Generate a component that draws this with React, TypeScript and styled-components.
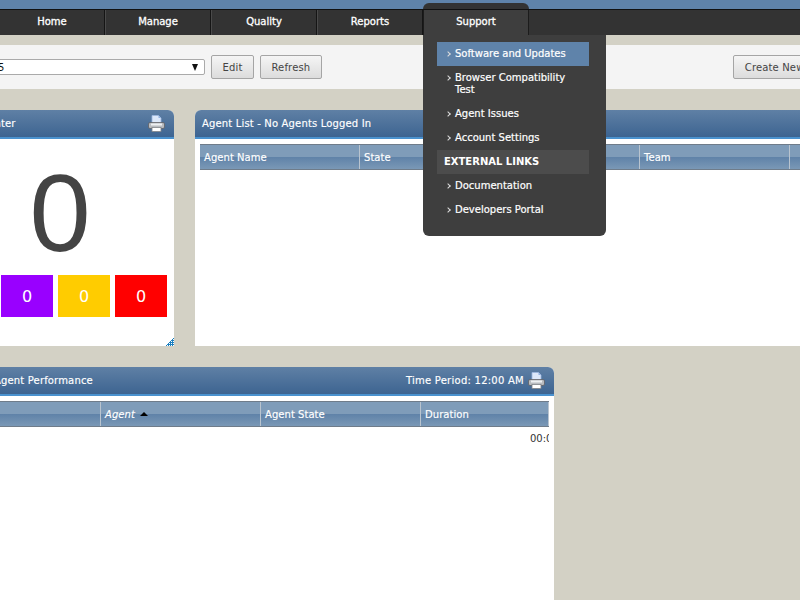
import styled, { createGlobalStyle } from 'styled-components';

const GlobalStyle = createGlobalStyle`
  html, body {
    margin: 0;
    padding: 0;
    background: #d3d1c5;
  }
  body {
    font-family: "DejaVu Sans", Verdana, sans-serif;
    font-size: 10px;
  }
`;

const Page = styled.div`
  position: relative;
  width: 800px;
  height: 600px;
  overflow: hidden;
  background: #d3d1c5;
`;

const TopStrip = styled.div`
  height: 9px;
  background: #5f83aa;
  border-bottom: 1px solid #111;
`;

const NavBar = styled.nav`
  display: flex;
  height: 25px;
  margin-left: -1px;
  background: #333;
`;

const NavItem = styled.div<{ $open?: boolean }>`
  position: relative;
  box-sizing: border-box;
  width: 106px;
  padding-bottom: 3px;
  display: flex;
  align-items: center;
  justify-content: center;
  color: #fff;
  font-size: 10px;
  -webkit-text-stroke: 0.3px #fff;
  border-right: 1px solid #151515;
  border-left: 1px solid #4a4a4a;
  ${(p) =>
    p.$open &&
    `
    background: #3e3e3e;
    border-left: 1px solid #1c1c1c;
    border-right: 1px solid #1c1c1c;
    z-index: 2;
    &::before {
      content: '';
      position: absolute;
      top: -7px;
      left: -1px;
      right: -1px;
      height: 6px;
      background: #333;
      border-radius: 6px 6px 0 0;
    }
  `}
`;

const Menu = styled.div`
  position: absolute;
  top: 25px;
  left: -1px;
  box-sizing: border-box;
  width: 183px;
  height: 201px;
  padding: 7px 17px 0 14px;
  background: #3e3e3e;
  border-radius: 0 0 6px 6px;
  text-align: left;
  -webkit-text-stroke: 0;
`;

const MenuItem = styled.div<{ $active?: boolean }>`
  position: relative;
  padding: 6px 12px 6px 18px;
  font-size: 10px;
  line-height: 12px;
  color: #fff;
  -webkit-text-stroke: 0.2px #fff;
  background: ${(p) => (p.$active ? '#5f83aa' : 'transparent')};
  &::before {
    content: '';
    position: absolute;
    left: 9px;
    top: 10px;
    width: 3px;
    height: 3px;
    border-top: 1px solid #ddd;
    border-right: 1px solid #ddd;
    transform: rotate(45deg);
  }
`;

const MenuHeading = styled.div`
  padding: 6px 7px;
  font-size: 10px;
  line-height: 12px;
  font-weight: bold;
  color: #fff;
  background: #4c4c4c;
`;

const Toolbar = styled.div`
  display: flex;
  align-items: center;
  gap: 6px;
  height: 44px;
  margin-top: 10px;
  background: #f4f4f4;
`;

const SelectBox = styled.div`
  box-sizing: border-box;
  display: flex;
  align-items: center;
  justify-content: space-between;
  width: 215px;
  height: 16px;
  margin-left: -10px;
  padding: 0 6px 0 7px;
  background: #fff;
  border: 1px solid #aaa;
  border-radius: 2px;
  color: #111;
  font-size: 10px;
`;

const Caret = styled.span`
  width: 0;
  height: 0;
  border-left: 3.5px solid transparent;
  border-right: 3.5px solid transparent;
  border-top: 7px solid #111;
`;

const Button = styled.button<{ $push?: boolean }>`
  box-sizing: border-box;
  height: 24px;
  padding: 0 10.5px;
  margin-left: ${(p) => (p.$push ? 'auto' : '0')};
  margin-right: ${(p) => (p.$push ? '-16px' : '0')};
  border: 1px solid #a5a5a5;
  border-radius: 2px;
  background: linear-gradient(#f5f5f5, #dcdcdc);
  color: #444;
  font-family: inherit;
  font-size: 10px;
  letter-spacing: 0.15px;
  white-space: nowrap;
`;

const PanelRow = styled.div<{ $left: number }>`
  display: flex;
  gap: 21px;
  margin: 21px 0 21px ${(p) => p.$left}px;
`;

const Panel = styled.section<{ $width: number; $height: number }>`
  position: relative;
  flex: none;
  box-sizing: border-box;
  width: ${(p) => p.$width}px;
  height: ${(p) => p.$height}px;
  background: #fff;
  border-radius: 6px 6px 0 0;
`;

const PanelHeader = styled.header`
  box-sizing: border-box;
  display: flex;
  align-items: center;
  height: 29px;
  padding: 0 9px 0 7px;
  background: linear-gradient(#5f80a5, #3d6491);
  border-bottom: 2px solid #4a92cf;
  border-radius: 6px 6px 0 0;
  color: #fff;
  font-size: 10px;
  letter-spacing: 0.16px;
  -webkit-text-stroke: 0.15px #fff;
`;

const HeaderRight = styled.div`
  display: flex;
  align-items: center;
  gap: 4px;
  margin-left: auto;
  letter-spacing: 0.25px;
`;

const PrinterIcon = () => (
  <svg width="17" height="17" viewBox="0 0 17 17">
    <path d="M4 .5h6.5L13 3v6H4z" fill="#dce8fa" stroke="#9db8e0" strokeWidth="0.8" />
    <path d="M10.5 .5V3H13" fill="#8fb0e0" />
    <rect x=".5" y="7.5" width="16" height="6" rx="1.5" fill="#b9bcc0" stroke="#5e6064" strokeWidth="0.8" />
    <rect x="3" y="8.5" width="11" height="2" fill="#eef0f2" />
    <rect x="4" y="12.5" width="9" height="4" fill="#fff" stroke="#7f8388" strokeWidth="0.8" />
  </svg>
);

const BigCount = styled.div`
  margin-top: 12px;
  text-align: center;
  font-family: "Liberation Sans", Arial, sans-serif;
  font-size: 110px;
  line-height: 124px;
  color: #444;
`;

const Tiles = styled.div`
  display: flex;
  justify-content: flex-end;
  gap: 5px;
  padding-right: 7px;
`;

const Tile = styled.div<{ $color: string }>`
  width: 52px;
  height: 42px;
  display: flex;
  align-items: center;
  justify-content: center;
  background: ${(p) => p.$color};
  color: #fff;
  font-size: 16px;
`;

const ResizeGrip = styled.svg`
  position: absolute;
  right: 0;
  bottom: 0;
`;

const TableHead = styled.div<{ $columns: string }>`
  display: grid;
  grid-template-columns: ${(p) => p.$columns};
  height: 26px;
  margin: 5px 5px 0;
  box-sizing: border-box;
  border-top: 1px solid #6f7c8a;
  border-bottom: 1px solid #6f7c8a;
  background: linear-gradient(#7f9cb9 0 50%, #5f82a8 50%, #7a98b6 100%);
`;

const HeadCell = styled.div<{ $italic?: boolean }>`
  display: flex;
  align-items: center;
  gap: 5px;
  padding-left: 4px;
  border-right: 1px solid #b9c4cf;
  color: #fff;
  font-size: 10px;
  font-style: ${(p) => (p.$italic ? 'italic' : 'normal')};
  letter-spacing: 0.05px;
  -webkit-text-stroke: 0.15px #fff;
  white-space: nowrap;
  overflow: hidden;
`;

const SortArrow = styled.span`
  width: 0;
  height: 0;
  border-left: 4px solid transparent;
  border-right: 4px solid transparent;
  border-bottom: 4px solid #000;
`;

const BodyRow = styled.div`
  display: flex;
  justify-content: flex-end;
  margin: 6px 5px 0;
  overflow: hidden;
  color: #333;
  font-size: 10px;
  line-height: 12px;
`;

const DurationValue = styled.span`
  display: block;
  width: 19px;
  overflow: hidden;
  white-space: nowrap;
`;

export default function App() {
  return (
    <Page>
      <GlobalStyle />
      <TopStrip />
      <NavBar>
        <NavItem>Home</NavItem>
        <NavItem>Manage</NavItem>
        <NavItem>Quality</NavItem>
        <NavItem>Reports</NavItem>
        <NavItem $open>
          Support
          <Menu>
            <MenuItem $active>Software and Updates</MenuItem>
            <MenuItem>Browser Compatibility Test</MenuItem>
            <MenuItem>Agent Issues</MenuItem>
            <MenuItem>Account Settings</MenuItem>
            <MenuHeading>EXTERNAL LINKS</MenuHeading>
            <MenuItem>Documentation</MenuItem>
            <MenuItem>Developers Portal</MenuItem>
          </Menu>
        </NavItem>
      </NavBar>
      <Toolbar>
        <SelectBox>
          <span>5</span>
          <Caret />
        </SelectBox>
        <Button>Edit</Button>
        <Button>Refresh</Button>
        <Button $push>Create New</Button>
      </Toolbar>
      <PanelRow $left={-54}>
        <Panel $width={228} $height={236}>
          <PanelHeader>
            Calls Center
            <HeaderRight>
              <PrinterIcon />
            </HeaderRight>
          </PanelHeader>
          <BigCount>0</BigCount>
          <Tiles>
            <Tile $color="#9900ff">0</Tile>
            <Tile $color="#ffcc00">0</Tile>
            <Tile $color="#ff0000">0</Tile>
          </Tiles>
          <ResizeGrip width="8" height="8" viewBox="0 0 8 8" shapeRendering="crispEdges">
            <path
              d="M7 .5H8M6 1.5H7M5 2.5H8M4 3.5H5M6 3.5H7M3 4.5H8M2 5.5H3M4 5.5H5M6 5.5H7M1 6.5H8M0 7.5H1M2 7.5H3M4 7.5H5M6 7.5H7"
              stroke="#1b7fbf"
            />
          </ResizeGrip>
        </Panel>
        <Panel $width={700} $height={236}>
          <PanelHeader>Agent List - No Agents Logged In</PanelHeader>
          <TableHead $columns="160px 160px 120px 150px 150px">
            <HeadCell>Agent Name</HeadCell>
            <HeadCell>State</HeadCell>
            <HeadCell />
            <HeadCell>Team</HeadCell>
            <HeadCell />
          </TableHead>
        </Panel>
      </PanelRow>
      <PanelRow $left={-13}>
        <Panel $width={567} $height={240}>
          <PanelHeader>
            Agent Performance
            <HeaderRight>
              Time Period: 12:00 AM
              <PrinterIcon />
            </HeaderRight>
          </PanelHeader>
          <TableHead $columns="109px 160px 160px 128px">
            <HeadCell />
            <HeadCell $italic>
              Agent
              <SortArrow />
            </HeadCell>
            <HeadCell>Agent State</HeadCell>
            <HeadCell>Duration</HeadCell>
          </TableHead>
          <BodyRow>
            <DurationValue>00:00:00</DurationValue>
          </BodyRow>
        </Panel>
      </PanelRow>
    </Page>
  );
}
